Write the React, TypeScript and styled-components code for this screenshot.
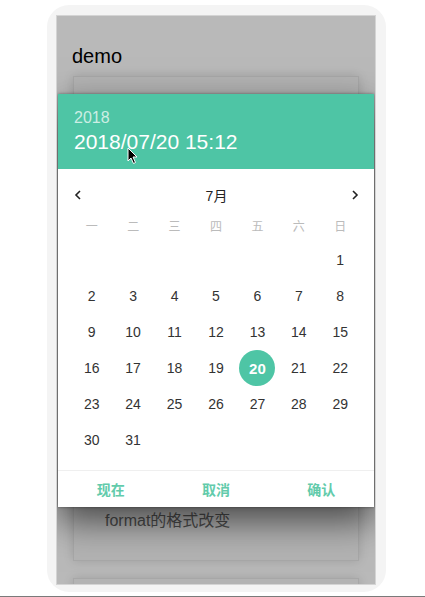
import React from "react";
import styled, { createGlobalStyle } from "styled-components";

const GREEN = "#4ec5a5";
const FONT = `"Liberation Sans", "Noto Sans CJK SC", sans-serif`;

const Global = createGlobalStyle`
  html, body { margin: 0; padding: 0; background: #fff; }
  body { font-family: ${FONT}; }
  * { box-sizing: border-box; }
`;

const Page = styled.div`
  width: 425px;
  height: 597px;
  display: flex;
  flex-direction: column;
  overflow: hidden;
`;

const Frame = styled.div`
  margin: 5px 0 0 47px;
  width: 339px;
  height: 587px;
  padding: 10px 10px 7px 9px;
  background: #f4f4f4;
  border-radius: 22px;
`;

const BottomLine = styled.div`
  margin-top: 4px;
  height: 1px;
  background: #7a7a7a;
`;

const Screen = styled.div`
  position: relative;
  width: 320px;
  height: 570px;
  border: 1px solid #d4d4d4;
  background: #fff;
  overflow: hidden;
`;

const Title = styled.div`
  margin: 28px 0 0 15px;
  font-size: 20px;
  line-height: 24px;
  color: #000;
`;

const Card = styled.div<{ $height: number; $gap: number }>`
  margin: ${(p) => p.$gap}px 0 0 16px;
  width: 286px;
  height: ${(p) => p.$height}px;
  background: #f7f7f7;
  border: 1px solid #e6e6e6;
  box-shadow: 0 0 10px rgba(0, 0, 0, 0.14);
  display: flex;
  flex-direction: column;
  justify-content: flex-end;
  padding: 0 0 27px 31px;
`;

const CardText = styled.div`
  font-size: 16px;
  line-height: 24px;
  color: #6a6a6a;
`;

const Mask = styled.div`
  position: absolute;
  inset: 0;
  background: rgba(0, 0, 0, 0.275);
`;

const Picker = styled.div`
  position: absolute;
  left: 1px;
  top: 78px;
  width: 316px;
  background: #fff;
  box-shadow: 0 14px 34px rgba(0, 0, 0, 0.6), 0 0 3px rgba(0, 0, 0, 0.4);
`;

const Header = styled.div`
  background: ${GREEN};
  padding: 14px 16px 13px;
  color: #fff;
`;

const Year = styled.div`
  font-size: 16px;
  line-height: 20px;
  color: rgba(255, 255, 255, 0.72);
`;

const DateTime = styled.div`
  font-size: 21px;
  line-height: 28px;
`;

const Body = styled.div`
  padding: 13px 13px 12px;
`;

const MonthRow = styled.div`
  height: 26px;
  display: flex;
  align-items: center;
  justify-content: space-between;
  padding: 0 2px 0 3px;
  font-size: 14px;
  color: #222;
`;

const Arrow = styled.svg`
  width: 8px;
  height: 10px;
  display: block;
`;

const Grid = styled.div`
  display: grid;
  grid-template-columns: repeat(7, 1fr);
`;

const WeekCell = styled.div`
  height: 34px;
  display: flex;
  align-items: center;
  justify-content: center;
  font-size: 12px;
  color: #bbb;
`;

const DayCell = styled.div`
  height: 36px;
  display: flex;
  align-items: center;
  justify-content: center;
`;

const Day = styled.span<{ $active?: boolean }>`
  width: 36px;
  height: 36px;
  border-radius: 50%;
  display: flex;
  align-items: center;
  justify-content: center;
  font-size: ${(p) => (p.$active ? 15 : 14)}px;
  font-weight: ${(p) => (p.$active ? 700 : 400)};
  color: ${(p) => (p.$active ? "#fff" : "#333")};
  background: ${(p) => (p.$active ? GREEN : "transparent")};
`;

const Footer = styled.div`
  border-top: 1px solid #efefef;
  height: 37px;
  display: grid;
  grid-template-columns: repeat(3, 1fr);
  align-items: center;
`;

const FooterButton = styled.div`
  text-align: center;
  font-size: 14px;
  font-weight: 700;
  color: #62cbab;
`;

const Cursor = styled.svg`
  position: absolute;
  left: 127px;
  top: 147px;
  width: 12px;
  height: 18px;
`;

const weekdays = ["一", "二", "三", "四", "五", "六", "日"];
const days: (number | null)[] = [
  null, null, null, null, null, null,
  ...Array.from({ length: 31 }, (_, i) => i + 1),
];

export default function App() {
  return (
    <>
      <Global />
      <Page>
        <Frame>
          <Screen>
            <Title>demo</Title>
            <Card $height={485} $gap={8}>
              <CardText>format的格式改变</CardText>
            </Card>
            <Card $height={60} $gap={17} />
            <Mask />
            <Picker>
              <Header>
                <Year>2018</Year>
                <DateTime>2018/07/20 15:12</DateTime>
              </Header>
              <Body>
                <MonthRow>
                  <Arrow viewBox="0 0 8 10">
                    <path d="M6 1 L2 5 L6 9" fill="none" stroke="#222" strokeWidth="1.6" />
                  </Arrow>
                  <span>7月</span>
                  <Arrow viewBox="0 0 8 10">
                    <path d="M2 1 L6 5 L2 9" fill="none" stroke="#222" strokeWidth="1.6" />
                  </Arrow>
                </MonthRow>
                <Grid>
                  {weekdays.map((w) => (
                    <WeekCell key={w}>{w}</WeekCell>
                  ))}
                  {days.map((d, i) => (
                    <DayCell key={i}>
                      {d !== null && <Day $active={d === 20}>{d}</Day>}
                    </DayCell>
                  ))}
                </Grid>
              </Body>
              <Footer>
                <FooterButton>现在</FooterButton>
                <FooterButton>取消</FooterButton>
                <FooterButton>确认</FooterButton>
              </Footer>
            </Picker>
          </Screen>
        </Frame>
        <BottomLine />
      </Page>
      <Cursor viewBox="0 0 12 18">
        <path d="M1 1 L1 14 L4 11 L6.5 16.5 L8.5 15.5 L6 10 L10 10 Z" fill="#000" stroke="#fff" strokeWidth="1" />
      </Cursor>
    </>
  );
}
